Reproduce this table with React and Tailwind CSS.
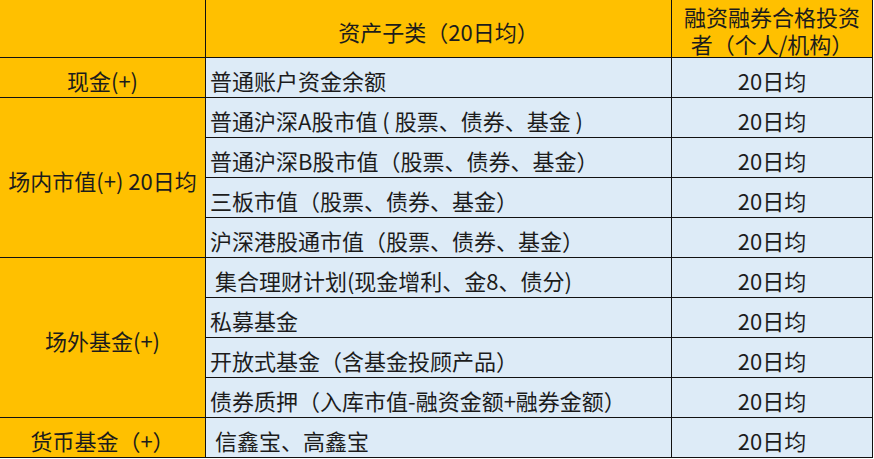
import React from "react";

const rows = [
  "普通账户资金余额",
  "普通沪深A股市值 ( 股票、债券、基金 )",
  "普通沪深B股市值（股票、债券、基金）",
  "三板市值（股票、债券、基金）",
  "沪深港股通市值（股票、债券、基金）",
  "\u00a0集合理财计划(现金增利、金8、债分)",
  "私募基金",
  "开放式基金（含基金投顾产品）",
  "债券质押（入库市值-融资金额+融券金额）",
  "\u00a0信鑫宝、高鑫宝",
];

export default function App() {
  return (
    <div
      className="w-[874px] h-[459px] bg-white text-[#1c1c1c] text-[22px] overflow-hidden"
      style={{ fontFamily: '"Noto Sans CJK SC", "Noto Sans", sans-serif' }}
    >
      <div className="grid grid-cols-[206px_466px_201px] grid-rows-[58px_repeat(10,40px)]">
        <div className="col-start-1 row-start-1 bg-[#FFC000] border-r border-b border-[#111]" />
        <div className="col-start-2 row-start-1 bg-[#FFC000] border-r border-b border-[#111] flex items-center justify-center pt-1 leading-none">
          资产子类（20日均）
        </div>
        <div className="col-start-3 row-start-1 bg-[#FFC000] border-r border-b border-[#111] flex items-center justify-center text-center leading-[27px] pt-[2px] whitespace-nowrap">
          <div>
            融资融券合格投资
            <br />
            者（个人/机构）
          </div>
        </div>

        <div className="col-start-1 row-start-2 row-span-1 bg-[#FFC000] border-r border-b border-[#111] flex items-center justify-center pt-1 leading-none">
          现金(+)
        </div>
        <div className="col-start-1 row-start-3 row-span-4 bg-[#FFC000] border-r border-b border-[#111] flex items-center justify-center pt-1 leading-none whitespace-nowrap">
          场内市值(+) 20日均
        </div>
        <div className="col-start-1 row-start-7 row-span-4 bg-[#FFC000] border-r border-b border-[#111] flex items-center justify-center pt-1 leading-none">
          场外基金(+)
        </div>
        <div className="col-start-1 row-start-11 row-span-1 bg-[#FFC000] border-r border-b border-[#111] flex items-center justify-center pt-1 leading-none">
          货币基金（+）
        </div>

        {rows.map((t, i) => (
          <React.Fragment key={i}>
            <div className="col-start-2 bg-[#DDEBF7] border-r border-b border-[#111] flex items-center pl-[4px] pt-1 leading-none whitespace-pre">
              {t}
            </div>
            <div className="col-start-3 bg-[#DDEBF7] border-r border-b border-[#111] flex items-center justify-center pt-1 leading-none">
              20日均
            </div>
          </React.Fragment>
        ))}
      </div>
    </div>
  );
}
